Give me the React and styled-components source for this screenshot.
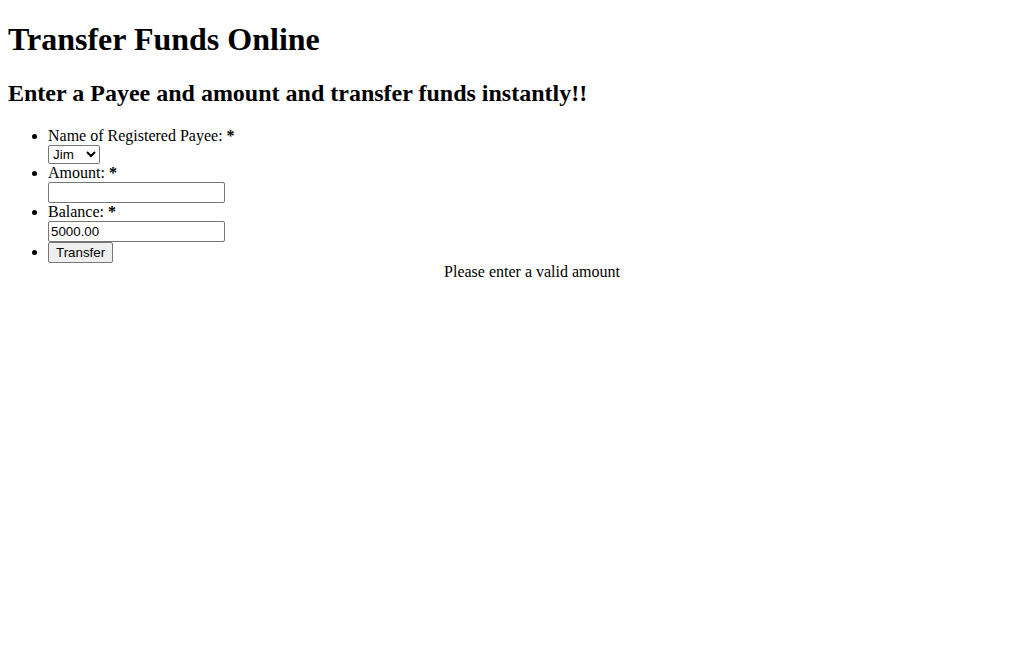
import React, { useState } from "react";
import styled, { createGlobalStyle } from "styled-components";

const Global = createGlobalStyle`
  body {
    margin: 0 8px 8px;
    font-family: "Liberation Serif", "Times New Roman", serif;
    font-size: 16px;
    color: #000;
    background: #fff;
  }
`;

const Title = styled.h1`
  font-size: 32px;
  font-weight: bold;
  margin: 21.44px 0;
`;

const Subtitle = styled.h2`
  font-size: 24px;
  font-weight: bold;
  margin: 19.92px 0;
`;

const FormList = styled.ul`
  list-style: disc;
  margin: 16px 0;
  padding-left: 40px;
`;

const Field = styled.li`
  line-height: normal;
`;

const Label = styled.label`
  display: block;
`;

const Required = styled.span`
  font-weight: bold;
`;

const Input = styled.input`
  font-family: "Liberation Sans", Arial, sans-serif;
  font-size: 13.33px;
  width: 177px;
  box-sizing: border-box;
  height: 21px;
  padding: 1px 2px;
  border: 1px solid #767676;
  border-radius: 2px;
`;

const Select = styled.select`
  font-family: "Liberation Sans", Arial, sans-serif;
  font-size: 13.33px;
  height: 19px;
  width: 52px;
  border: 1px solid #767676;
  border-radius: 2px;
  background: #fff;
`;

const Button = styled.button`
  font-family: "Liberation Sans", Arial, sans-serif;
  font-size: 13.33px;
  padding: 1px 7px;
  height: 21px;
  border: 1px solid #767676;
  border-radius: 2px;
  background: #efefef;
`;

const Message = styled.div`
  text-align: center;
`;

const App = () => {
  const [payee, setPayee] = useState("Jim");
  const [amount, setAmount] = useState("");
  const [balance, setBalance] = useState("5000.00");

  return (
    <>
      <Global />
      <Title>Transfer Funds Online</Title>
      <Subtitle>Enter a Payee and amount and transfer funds instantly!!</Subtitle>
      <FormList>
        <Field>
          <Label>
            Name of Registered Payee: <Required>*</Required>
          </Label>
          <Select value={payee} onChange={(e) => setPayee(e.target.value)}>
            <option>Jim</option>
            <option>Mary</option>
            <option>Bob</option>
          </Select>
        </Field>
        <Field>
          <Label>
            Amount: <Required>*</Required>
          </Label>
          <Input value={amount} onChange={(e) => setAmount(e.target.value)} />
        </Field>
        <Field>
          <Label>
            Balance: <Required>*</Required>
          </Label>
          <Input value={balance} onChange={(e) => setBalance(e.target.value)} />
        </Field>
        <Field>
          <Button>Transfer</Button>
        </Field>
        <Message>Please enter a valid amount</Message>
      </FormList>
    </>
  );
};

export default App;
